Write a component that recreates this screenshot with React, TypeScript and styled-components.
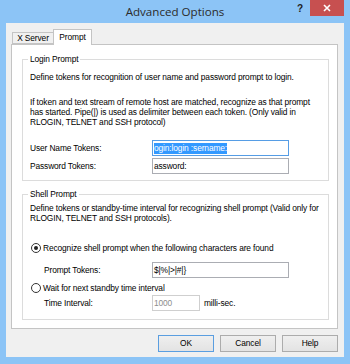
import React from 'react';
import styled, { createGlobalStyle } from 'styled-components';

const GlobalStyle = createGlobalStyle`
  html, body {
    margin: 0;
    padding: 0;
    background: #8cc4f6;
  }
  body {
    font-family: "Liberation Sans", Arial, sans-serif;
    letter-spacing: -0.12px;
  }
  * {
    box-sizing: border-box;
  }
`;

const TEXT_SIZE = '8.4px';

const Frame = styled.div`
  width: 350px;
  height: 364px;
  background: #8cc4f6;
  padding: 0 6px 7px;
  display: flex;
  flex-direction: column;
`;

const TitleBar = styled.div`
  height: 23px;
  flex-shrink: 0;
  display: grid;
  grid-template-columns: 1fr auto 1fr;
`;

const Title = styled.div`
  grid-column: 2;
  font-family: "Open Sans", "Noto Sans", sans-serif;
  font-size: 11.6px;
  line-height: 24px;
  letter-spacing: 0;
  color: #2b2b2b;
  white-space: nowrap;
`;

const Controls = styled.div`
  grid-column: 3;
  display: flex;
  justify-content: flex-end;
  align-items: flex-start;
`;

const HelpButton = styled.div`
  width: 20px;
  height: 16px;
  display: flex;
  align-items: center;
  justify-content: center;
  font-family: "Liberation Sans", Arial, sans-serif;
  font-weight: bold;
  font-size: 10px;
  color: #1e1e1e;
`;

const CloseButton = styled.div`
  width: 34px;
  height: 16px;
  background: #c75050;
  display: flex;
  align-items: center;
  justify-content: center;
`;

const Client = styled.div`
  flex: 1;
  background: #f0f0f0;
  padding: 6px 6px 5px 5px;
  display: flex;
  flex-direction: column;
`;

const TabStrip = styled.div`
  height: 15px;
  display: flex;
  align-items: flex-end;
  position: relative;
  z-index: 1;
`;

const Tab = styled.div<{ $active?: boolean; $width: number }>`
  width: ${p => p.$width}px;
  height: ${p => (p.$active ? 16 : 12)}px;
  margin-bottom: ${p => (p.$active ? -1 : 0)}px;
  margin-left: ${p => (p.$active ? -1 : 1)}px;
  border: 1px solid #c4c4c4;
  border-bottom: ${p => (p.$active ? 'none' : '1px solid #c4c4c4')};
  background: ${p => (p.$active ? '#ffffff' : '#f0f0f0')};
  font-size: ${TEXT_SIZE};
  line-height: ${p => (p.$active ? 14 : 11)}px;
  text-align: center;
  color: #000;
  position: relative;
  z-index: ${p => (p.$active ? 2 : 1)};
`;

const TabPanel = styled.div`
  height: 285px;
  background: #ffffff;
  border: 1px solid #c4c4c4;
  padding: 9px 8px 0 10px;
  display: flex;
  flex-direction: column;
  gap: 8px;
`;

const Group = styled.fieldset<{ $pt: number; $pb: number }>`
  margin: 0;
  min-width: 0;
  border: 1px solid #dcdcdc;
  padding: ${p => p.$pt}px 8px ${p => p.$pb}px 7px;
`;

const Legend = styled.legend`
  padding: 0 2px;
  margin-left: -2px;
  font-size: ${TEXT_SIZE};
  line-height: 10px;
  color: #000;
`;

const Para = styled.div<{ $mt?: number }>`
  margin-top: ${p => p.$mt ?? 0}px;
  font-size: ${TEXT_SIZE};
  line-height: 10px;
  color: #000;
  white-space: nowrap;
`;

const FieldRow = styled.div<{ $indent?: number; $mt?: number }>`
  margin-top: ${p => p.$mt ?? 0}px;
  padding-left: ${p => p.$indent ?? 0}px;
  display: grid;
  grid-template-columns: ${p => 122 - (p.$indent ?? 0)}px auto;
  align-items: center;
  font-size: ${TEXT_SIZE};
  color: #000;
`;

const Label = styled.span`
  white-space: nowrap;
`;

const TextBox = styled.div<{ $focused?: boolean; $disabled?: boolean; $width?: number }>`
  width: ${p => p.$width ?? 137}px;
  height: 16px;
  border: 1px solid ${p => (p.$focused ? '#569de5' : p.$disabled ? '#cfcfcf' : '#abadb3')};
  background: #fff;
  padding: 0 1px;
  font-size: ${TEXT_SIZE};
  line-height: 14px;
  color: ${p => (p.$disabled ? '#8d8d8d' : '#000')};
  white-space: nowrap;
  overflow: hidden;
`;

const Selection = styled.span`
  display: inline-block;
  background: #3399ff;
  color: #fff;
  line-height: 11px;
  margin-top: 1px;
`;

const Inline = styled.div`
  display: flex;
  align-items: center;
  gap: 4px;
`;

const RadioRow = styled.div<{ $mt?: number }>`
  margin-top: ${p => p.$mt ?? 0}px;
  display: flex;
  align-items: center;
  gap: 2px;
  font-size: ${TEXT_SIZE};
  line-height: 10px;
  color: #000;
  white-space: nowrap;
`;

const RadioCircle = styled.span<{ $checked?: boolean }>`
  width: 10px;
  height: 10px;
  margin-left: 1px;
  border-radius: 50%;
  border: 1px solid #333;
  background: #fff;
  display: flex;
  align-items: center;
  justify-content: center;

  &::after {
    content: '';
    width: 4px;
    height: 4px;
    border-radius: 50%;
    background: ${p => (p.$checked ? '#222' : 'transparent')};
  }
`;

const ButtonRow = styled.div`
  margin-top: 6px;
  display: flex;
  justify-content: flex-end;
  gap: 6px;
`;

const Button = styled.div<{ $default?: boolean }>`
  width: 56px;
  height: 17px;
  border: 1px solid ${p => (p.$default ? '#5a9ee0' : '#acacac')};
  background: linear-gradient(#efefef, #e3e3e3);
  font-size: ${TEXT_SIZE};
  line-height: 15px;
  text-align: center;
  color: #000;
`;

const CloseIcon = () => (
  <svg width="8" height="8" viewBox="0 0 8 8">
    <path d="M1 1 L7 7 M7 1 L1 7" stroke="#fff" strokeWidth="1.6" />
  </svg>
);

export default function App() {
  return (
    <>
      <GlobalStyle />
      <Frame>
        <TitleBar>
          <Title>Advanced Options</Title>
          <Controls>
            <HelpButton>?</HelpButton>
            <CloseButton>
              <CloseIcon />
            </CloseButton>
          </Controls>
        </TitleBar>
        <Client>
          <TabStrip>
            <Tab $width={42}>X Server</Tab>
            <Tab $width={39} $active>Prompt</Tab>
          </TabStrip>
          <TabPanel>
            <Group $pt={8} $pb={6}>
              <Legend>Login Prompt</Legend>
              <Para>Define tokens for recognition of user name and password prompt to login.</Para>
              <Para $mt={15}>
                If token and text stream of remote host are matched, recognize as that prompt
                <br />
                has started. Pipe(|) is used as delimiter between each token. (Only valid in
                <br />
                RLOGIN, TELNET and SSH protocol)
              </Para>
              <FieldRow $mt={13}>
                <Label>User Name Tokens:</Label>
                <TextBox $focused>
                  <Selection>ogin:login :sername:</Selection>
                </TextBox>
              </FieldRow>
              <FieldRow $mt={2}>
                <Label>Password Tokens:</Label>
                <TextBox>assword:</TextBox>
              </FieldRow>
            </Group>
            <Group $pt={4} $pb={8}>
              <Legend>Shell Prompt</Legend>
              <Para>
                Define tokens or standby-time interval for recognizing shell prompt (Valid only for
                <br />
                RLOGIN, TELNET and SSH protocols).
              </Para>
              <RadioRow $mt={20}>
                <RadioCircle $checked />
                Recognize shell prompt when the following characters are found
              </RadioRow>
              <FieldRow $indent={14} $mt={9}>
                <Label>Prompt Tokens:</Label>
                <TextBox>$|%|&gt;|#|&#125;</TextBox>
              </FieldRow>
              <RadioRow $mt={5}>
                <RadioCircle />
                Wait for next standby time interval
              </RadioRow>
              <FieldRow $indent={14} $mt={2}>
                <Label>Time Interval:</Label>
                <Inline>
                  <TextBox $disabled $width={48}>1000</TextBox>
                  <span>milli-sec.</span>
                </Inline>
              </FieldRow>
            </Group>
          </TabPanel>
          <ButtonRow>
            <Button $default>OK</Button>
            <Button>Cancel</Button>
            <Button>Help</Button>
          </ButtonRow>
        </Client>
      </Frame>
    </>
  );
}
